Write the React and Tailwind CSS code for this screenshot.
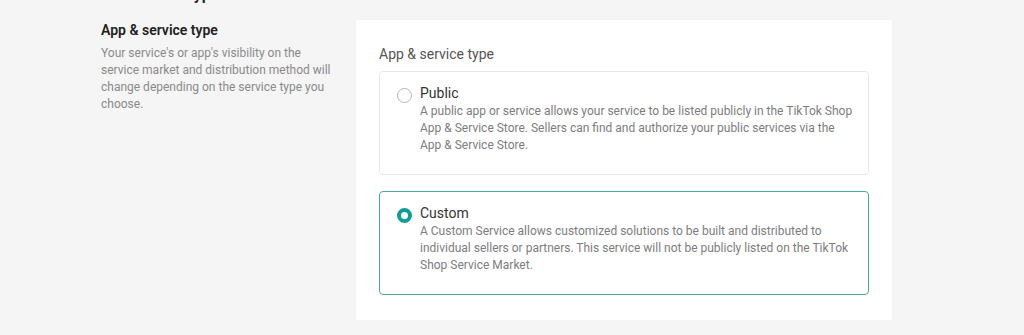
import React, { useState } from 'react'

const options = [
    {
        value: 'public',
        title: 'Public',
        desc: 'A public app or service allows your service to be listed publicly in the TikTok Shop App & Service Store. Sellers can find and authorize your public services via the App & Service Store.',
    },
    {
        value: 'custom',
        title: 'Custom',
        desc: 'A Custom Service allows customized solutions to be built and distributed to individual sellers or partners. This service will not be publicly listed on the TikTok Shop Service Market.',
    },
]

const App = () => {
    const [type, setType] = useState('custom')

    return (
        <div className="h-[335px] overflow-hidden bg-[#f5f5f5] font-['Roboto',sans-serif]">
            <div className="flex pl-[101px] pt-[20px]">
                {/* left column */}
                <div className="w-[240px] shrink-0">
                    <h2 className="-mt-[36px] mb-[14px] pl-[30px] text-[16px] font-semibold leading-[22px] text-[#222]">Service type</h2>
                    <h3 className="text-[14px] font-semibold leading-[20px] text-[#222]">App &amp; service type</h3>
                    <p className="mt-[5px] text-[12px] leading-[17px] text-[#8a8a8a]">
                        Your service's or app's visibility on the service market and distribution method will change depending on the service type you choose.
                    </p>
                </div>

                {/* panel */}
                <div className="ml-[15px] w-[536px] bg-white px-[23px] pt-[24px] pb-[25px]">
                    <div className="text-[14px] leading-[20px] text-[#555]">App &amp; service type</div>
                    <div className="mt-[7px] flex flex-col gap-4">
                        {options.map((o) => {
                            const active = type === o.value
                            return (
                                <div
                                    key={o.value}
                                    onClick={() => setType(o.value)}
                                    className={
                                        active
                                            ? 'flex cursor-pointer gap-[8px] rounded-[4px] border border-[#4aa8a5] pt-[11px] pb-[20px] pl-[17px] pr-[12px]'
                                            : 'flex cursor-pointer gap-[8px] rounded-[4px] border border-[#e8e8e8] pt-[11px] pb-[20px] pl-[17px] pr-[12px]'
                                    }
                                >
                                    <div className="pt-[5px]">
                                        {active ? (
                                            <span className="block h-[15px] w-[15px] rounded-full border-[4px] border-[#109c97] bg-white" />
                                        ) : (
                                            <span className="block h-[15px] w-[15px] rounded-full border border-[#b5b5b5] bg-white" />
                                        )}
                                    </div>
                                    <div>
                                        <div className="text-[14px] leading-[20px] text-[#333]">{o.title}</div>
                                        <p className="text-[12px] leading-[17px] text-[#7d7d7d]">{o.desc}</p>
                                    </div>
                                </div>
                            )
                        })}
                    </div>
                </div>
            </div>
        </div>
    )
}

export default App
